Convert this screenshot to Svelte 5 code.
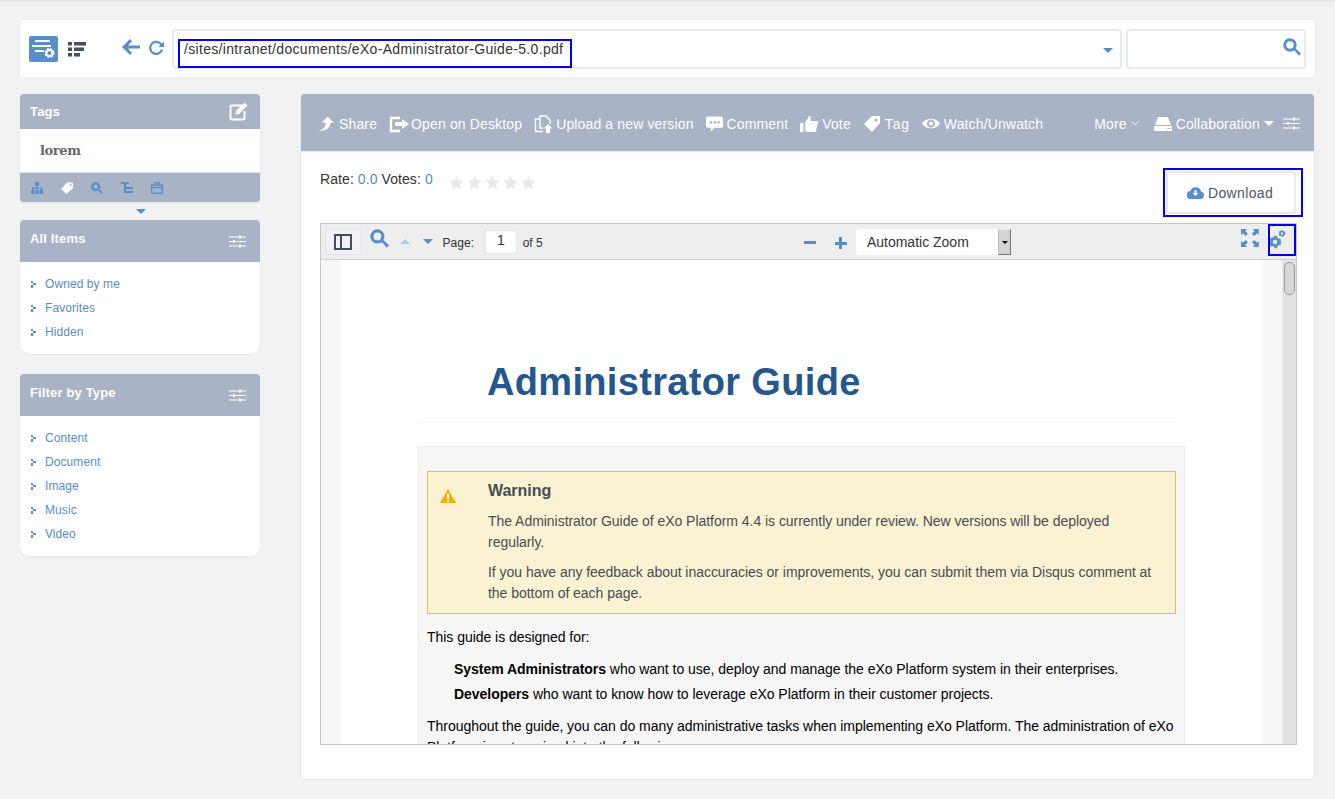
<script>
  const actions = [
    { label: 'Share', d: 'M10 1l7 7h-4c0 4-4 9-12 8 4-1 7-3 7-8H4z', w: 19 },
    { label: 'Open on Desktop', open: true, w: 20 },
    { label: 'Upload a new version', file: true, w: 20 },
    { label: 'Comment', d: 'M2 1h14a2 2 0 0 1 2 2v8a2 2 0 0 1-2 2H9l-4 4v-4H2a2 2 0 0 1-2-2V3a2 2 0 0 1 2-2zM4 6v2.500h2.500V6zM8 6v2.500h2.500V6zM12 6v2.500h2.500V6z', w: 19 },
    { label: 'Vote', d: 'M0 8h3.500v9H0zM5 8l4-7c2 0 2 2 1.500 5H17c1.500 0 2 2 .5 3l-1.500 7c-.5 1-1 1-2 1H8c-1 0-3-1-3-2z', w: 20 },
    { label: 'Tag', d: 'M1 9l8-8h8v7l-8 9zM13 3.500a1.500 1.500 0 1 0 .01 0z', w: 20, wide: true },
    { label: 'Watch/Unwatch', eye: true, w: 20 }
  ];
  const allItems = ['Owned by me', 'Favorites', 'Hidden'];
  const types = ['Content', 'Document', 'Image', 'Music', 'Video'];
</script>

{#snippet sliders(cls)}
  <svg class={cls} width="17" height="13" viewBox="0 0 17 13" fill="#fff">
    <path d="M0 1.500h17v1H0zM0 6h17v1H0zM0 10.500h17v1H0z" />
    <path d="M10 .5h2v3h-2zM4 5h2v3H4zM10 9.500h2v3h-2z" />
  </svg>
{/snippet}

{#snippet lens(size, color)}
  <svg width={size} height={size} viewBox="0 0 18 18">
    <circle cx="7" cy="7" r="5.200" fill="none" stroke={color} stroke-width="3" />
    <path d="M10.500 11.500l1.500-1.500 6 5.500-2 2.200z" fill={color} />
  </svg>
{/snippet}

{#snippet bullet()}
  <svg class="bullet" width="5" height="7" viewBox="0 0 5 7" fill="#578dc9">
    <path d="M0 0h2v2H0zM2 2h3v2H2zM0 4h2v3H0z" />
  </svg>
{/snippet}

{#snippet gear(cx, cy, r)}
  <circle {cx} {cy} r={r * 0.7} fill="none" stroke="#578dc9" stroke-width={r * 0.55} />
  <circle {cx} {cy} r={r} fill="none" stroke="#578dc9" stroke-width={r * 0.38} stroke-dasharray={r * 0.55} />
{/snippet}

<div class="page">
  <header class="topbar">
    <button class="viewbtn active" aria-label="Detail view">
      <svg width="23" height="18" viewBox="0 0 23 18" fill="#fff">
        <path d="M3 0h15v2H3zM0 5h19v2H0zM3 10h9v2H3z" />
        <circle cx="17.500" cy="13" r="3" fill="none" stroke="#fff" stroke-width="2" />
        <circle cx="17.500" cy="13" r="4.300" fill="none" stroke="#fff" stroke-width="1.400" stroke-dasharray="2 1.400" />
      </svg>
    </button>
    <button class="viewbtn list" aria-label="List view">
      <svg width="18" height="15" viewBox="0 0 18 15" fill="#474d63">
        <path d="M0 0h4v3.500H0zM6 0h12v3.500H6zM0 5.500h4V9H0zM6 5.500h10V9H6zM0 11h4v3.500H0zM6 11h6v3.500H6z" />
      </svg>
    </button>
    <svg class="back" width="18" height="16" viewBox="0 0 18 16" fill="#578dc9">
      <path d="M8 0l2 2-4 4.500h12v3H6l4 4.500-2 2-8-8z" />
    </svg>
    <svg class="refresh" width="15" height="15" viewBox="0 0 15 15" fill="none" stroke="#578dc9">
      <path d="M12.500 5A6 6 0 1 0 13 9.500" stroke-width="2.200" />
      <path d="M15 1.500V7H9.500z" fill="#578dc9" stroke="none" />
    </svg>
    <div class="combo">
      <span class="path">/sites/intranet/documents/eXo-Administrator-Guide-5.0.pdf</span>
      <span class="caret combo-caret"></span>
    </div>
    <div class="searchbox">
      {@render lens(18, '#578dc9')}
    </div>
  </header>

  <div class="columns">
    <aside class="side">
      <section class="panel tags">
        <div class="tags-head">
          <span>Tags</span>
          <svg width="19" height="19" viewBox="0 0 19 19">
            <path d="M13 3.500H3a1.500 1.500 0 0 0-1.500 1.500v11A1.500 1.500 0 0 0 3 17.500h11a1.500 1.500 0 0 0 1.500-1.500V9" fill="none" stroke="#fff" stroke-width="2" />
            <path d="M7 9L15.500 .5l3 3L10 12l-3.500.5z" fill="#fff" />
          </svg>
        </div>
        <div class="tag-cloud">lorem</div>
        <div class="tag-tools">
          <svg width="12" height="12" viewBox="0 0 12 12" fill="#578dc9"><path d="M4 0h4v4H6.500v1.500H11V8h1v4H8.500V8h1V6.500h-3V8h1v4h-3V8h1V6.500h-3V8h1v4H0V8h1V5.500h4.500V4H4z" /></svg>
          <svg width="12" height="12" viewBox="0 0 12 12" fill="#fff"><path d="M0 7l6-6.500h6V6l-6.500 6zM9.500 2a1 1 0 1 0 .01 0z" /></svg>
          <svg width="12" height="12" viewBox="0 0 18 18"><circle cx="7" cy="7" r="5" fill="none" stroke="#578dc9" stroke-width="3.400" /><path d="M10 12l2-2 6 6-2 2z" fill="#578dc9" /></svg>
          <svg width="12" height="12" viewBox="0 0 12 12" fill="#578dc9"><path d="M0 0h8v2H5v3h7v2H5v2h7v2H3V2H0z" /></svg>
          <svg width="12" height="12" viewBox="0 0 12 12" fill="none" stroke="#578dc9" stroke-width="1.300"><rect x=".7" y="3" width="10.600" height="8.300" /><path d="M4 3V.7h4V3M.7 5.500h10.600" /></svg>
        </div>
      </section>
      <div class="expander"><span class="caret"></span></div>
      <section class="panel box">
        <div class="box-head"><span>All Items</span>{@render sliders('')}</div>
        <ul>
          {#each allItems as item}
            <li>{@render bullet()}<span>{item}</span></li>
          {/each}
        </ul>
      </section>
      <section class="panel box">
        <div class="box-head"><span>Filter by Type</span>{@render sliders('')}</div>
        <ul>
          {#each types as item}
            <li>{@render bullet()}<span>{item}</span></li>
          {/each}
        </ul>
      </section>
    </aside>

    <main class="main">
      <nav class="actions">
        {#each actions as a}
          <span class="action" class:wide={a.wide}>
            <svg width={a.w} height="18" viewBox="0 0 20 18" fill="#fff">
              {#if a.file}
                <path d="M6 4V1h6l4 4v4M6 4H1.500v12.500H9M6 4v9h3" fill="none" stroke="#fff" stroke-width="1.400" />
                <path d="M14 9l4.500 4.500H16V18h-4v-4.500H9.500z" />
              {:else if a.open}
                <path d="M11 3H2v13h9" fill="none" stroke="#fff" stroke-width="2.400" />
                <path d="M13 4l7 5-7 5v-3H6V7h7z" />
              {:else if a.eye}
                <path d="M0 8.500C4 2 14 2 18 8.500 14 15 4 15 0 8.500zM9 4.500a4 4 0 1 0 .01 0zM9 6.500a2 2 0 1 1-.01 0z" fill-rule="evenodd" />
              {:else}
                <path d={a.d} fill-rule="evenodd" />
              {/if}
            </svg>
            <span>{a.label}</span>
          </span>
        {/each}
        <span class="more">More
          <svg width="8" height="5" viewBox="0 0 8 5" fill="none" stroke="#fff"><path d="M.5.5L4 4 7.500.5" /></svg>
        </span>
        <span class="collab">
          <svg width="18" height="14" viewBox="0 0 18 14" fill="#fff"><path d="M4 0h10l3 8H1zM0 9h18v5H0z" /><path d="M13 11h3v1h-3z" fill="#a8b3c5" /></svg>
          <span>Collaboration</span>
          <span class="caret white"></span>
        </span>
        {@render sliders('nav-sliders')}
      </nav>

      <div class="rate-row">
        <div class="rate">
          <span>Rate: <b>0.0</b> Votes: <b>0</b></span>
          <span class="stars">
            {#each [0, 1, 2, 3, 4] as s (s)}
              <svg width="15" height="15" viewBox="0 0 15 15" fill="#e9e9e9"><path d="M7.500 0l2.100 5.200 5.400.4-4.200 3.500 1.400 5.500-4.700-3-4.700 3 1.400-5.500L0 5.600l5.400-.4z" /></svg>
            {/each}
          </span>
        </div>
        <div class="outline">
          <button class="download">
            <svg width="17" height="13" viewBox="0 0 17 13"><path d="M4 13a4 4 0 0 1-.5-8A5.500 5.500 0 0 1 14 5.500 3.800 3.800 0 0 1 13 13z" fill="#578dc9" /><path d="M7.500 4h2v3h2l-3 3-3-3h2z" fill="#fff" /></svg>
            Download
          </button>
        </div>
      </div>

      <div class="viewer">
        <div class="vbar">
          <button class="sidebar-btn" aria-label="Toggle sidebar">
            <svg width="18" height="16" viewBox="0 0 18 16" fill="none" stroke="#474d63" stroke-width="2"><rect x="1" y="1" width="16" height="14" /><path d="M7 1v14" /></svg>
          </button>
          <span class="v-lens">{@render lens(19, '#578dc9')}</span>
          <span class="tri up"></span>
          <span class="tri down"></span>
          <span class="page-lbl">Page:</span>
          <span class="page-input">1</span>
          <span class="of">of 5</span>
          <span class="zoom-minus"></span>
          <span class="zoom-plus"></span>
          <div class="zoom-select">
            <span>Automatic Zoom</span>
            <span class="select-arrow"><i></i></span>
          </div>
          <svg class="fullscreen" width="18" height="18" viewBox="0 0 18 18" fill="#578dc9">
            <path d="M0 0h6L4.200 1.800 7 4.600 4.600 7 1.800 4.200 0 6zM18 0v6l-1.800-1.800L13.400 7 11 4.600l2.800-2.800L12 0zM0 18v-6l1.800 1.800L4.600 11 7 13.400l-2.800 2.800L6 18zM18 18h-6l1.800-1.800L11 13.400l2.400-2.400 2.800 2.800L18 12z" />
          </svg>
          <div class="gear-box">
            <svg width="18" height="24" viewBox="0 0 18 24">
              {@render gear(5, 16, 5.200)}
              {@render gear(12, 7.500, 2.800)}
            </svg>
          </div>
        </div>
        <div class="vbody">
          <div class="doc-wrap">
            <div class="doc">
              <h1>Administrator Guide</h1>
              <div class="rule"></div>
              <div class="content">
                <div class="warning">
                  <svg class="warn-ico" width="16" height="14" viewBox="0 0 16 14">
                    <path d="M8 0l8 14H0z" fill="#f5b000" />
                    <path d="M7 4.500h2V10H7zM7 11h2v2H7z" fill="#fff" />
                  </svg>
                  <div class="warn-text">
                    <h2>Warning</h2>
                    <p>The Administrator Guide of eXo Platform 4.4 is currently under review. New versions will be deployed regularly.</p>
                    <p>If you have any feedback about inaccuracies or improvements, you can submit them via Disqus comment at the bottom of each page.</p>
                  </div>
                </div>
                <p class="intro">This guide is designed for:</p>
                <p class="aud first"><strong>System Administrators</strong> who want to use, deploy and manage the eXo Platform system in their enterprises.</p>
                <p class="aud"><strong>Developers</strong> who want to know how to leverage eXo Platform in their customer projects.</p>
                <p class="through">Throughout the guide, you can do many administrative tasks when implementing eXo Platform. The administration of eXo Platform is categorized into the following:</p>
              </div>
            </div>
          </div>
          <div class="scrolltrack"><div class="thumb"></div></div>
        </div>
      </div>
    </main>
  </div>
</div>

<style>
  :global(body) {
    margin: 0;
    background: #f2f2f2;
    font-family: "Liberation Sans", Arial, sans-serif;
  }
  .page {
    height: 799px;
    box-sizing: border-box;
    padding: 20px 20px 0;
    overflow: hidden;
    box-shadow: inset 0 3px 3px -2px #dcdcdc;
  }
  button { font-family: inherit; padding: 0; margin: 0; }
  .caret {
    display: inline-block;
    width: 0;
    height: 0;
    border-left: 5px solid transparent;
    border-right: 5px solid transparent;
    border-top: 5px solid #578dc9;
  }
  .caret.white { border-top-color: #fff; margin-left: 4px; }

  .topbar {
    display: flex;
    align-items: flex-start;
    height: 57px;
    box-sizing: border-box;
    padding-top: 9px;
    width: 1295px;
    background: #fff;
    border-radius: 3px;
    box-shadow: 0 0 2px #dfe5ee;
  }
  .viewbtn {
    border: 0;
    background: none;
    width: 29px;
    height: 26px;
    margin: 7px 0 0 9px;
    display: flex;
    align-items: center;
    justify-content: center;
    border-radius: 2px;
  }
  .viewbtn.active { background: #578dc9; }
  .viewbtn.list { margin-left: 10px; width: 18px; }
  .back { margin: 10px 0 0 36px; }
  .refresh { margin: 11px 0 0 9px; }
  .combo {
    margin-left: 8px;
    width: 950px;
    height: 40px;
    box-sizing: border-box;
    border: 2px solid #e6ebf2;
    border-radius: 4px;
    display: flex;
    align-items: flex-start;
    padding: 8px 0 0 4px;
    background: #fff;
  }
  .path {
    width: 394px;
    height: 29px;
    box-sizing: border-box;
    border: 2px solid #0000ee;
    padding: 0 0 0 4px;
    font-size: 14px;
    line-height: 16px;
    letter-spacing: 0.32px;
    color: #333;
    white-space: nowrap;
  }
  .combo-caret { margin: 9px 0 0 531px; }
  .searchbox {
    margin-left: 4px;
    width: 180px;
    height: 40px;
    box-sizing: border-box;
    border: 2px solid #e6ebf2;
    border-radius: 4px;
    display: flex;
    justify-content: flex-end;
    align-items: flex-start;
    padding: 7px 3px 0 0;
  }

  .columns {
    display: flex;
    gap: 40px;
    margin-top: 17px;
    align-items: flex-start;
  }
  .side { width: 240px; flex: none; }
  .panel { background: #fff; border-radius: 4px; overflow: hidden; }
  .tags { box-shadow: 0 1px 2px #dfdfdf; }
  .tags-head {
    height: 35px;
    background: #a8b3c5;
    display: flex;
    align-items: center;
    justify-content: space-between;
    padding: 0 12px 0 10px;
    color: #fff;
    font-size: 13px;
    font-weight: bold;
    letter-spacing: 0.15px;
  }
  .tag-cloud {
    height: 43px;
    box-sizing: border-box;
    padding: 13px 0 0 20px;
    font: bold 13px/18px "DejaVu Serif", serif;
    letter-spacing: -0.4px;
    color: #666;
  }
  .tag-tools {
    height: 30px;
    background: #a8b3c5;
    border-top: 1px solid #dfe4ea;
    display: flex;
    align-items: center;
    gap: 18px;
    padding-left: 11px;
    box-sizing: border-box;
  }
  .expander {
    height: 18px;
    display: flex;
    justify-content: center;
    align-items: flex-start;
    padding: 7px 0 0 1px;
    box-sizing: border-box;
  }
  .box { border-radius: 4px 4px 10px 10px; margin-bottom: 20px; box-shadow: 0 1px 2px #e4e4e4; }
  .box-head {
    height: 42px;
    box-sizing: border-box;
    background: #a8b3c5;
    display: flex;
    justify-content: space-between;
    padding: 11px 14px 0 10px;
    color: #fff;
    font-size: 13px;
    font-weight: bold;
    line-height: 15px;
    letter-spacing: 0.15px;
  }
  .box-head svg { margin-top: 4px; }
  ul { list-style: none; margin: 0; padding: 10px 0; }
  li {
    height: 24px;
    display: flex;
    align-items: center;
    padding-left: 11px;
    font-size: 12px;
    letter-spacing: 0.08px;
    color: #578dc9;
  }
  .bullet { margin-right: 9px; }

  .main {
    width: 1015px;
    height: 686px;
    box-sizing: border-box;
    background: #fff;
    border: 1px solid #e6ebf0;
    border-top: 0;
    border-radius: 4px;
    overflow: hidden;
  }
  .actions {
    margin: 0 -1px;
    height: 58px;
    box-sizing: border-box;
    background: #a8b3c5;
    border-bottom: 1px solid #e6ebf0;
    display: flex;
    align-items: center;
    padding: 2px 0 0 18px;
    color: #fff;
    font-size: 14px;
    letter-spacing: 0.14px;
    gap: 12px;
  }
  .action { display: flex; align-items: center; gap: 2px; white-space: nowrap; }
  .action.wide { letter-spacing: 0.8px; }
  .more { margin-left: 39px; display: flex; align-items: center; gap: 4px; }
  .collab { margin-left: 3px; display: flex; align-items: center; gap: 4px; }
  .collab .caret { margin-left: 0; }
  .nav-sliders { margin-left: -3px; }

  .rate-row {
    display: flex;
    justify-content: space-between;
    height: 72px;
    box-sizing: border-box;
    padding: 16px 11px 0 19px;
  }
  .rate {
    font-size: 14px;
    line-height: 20px;
    letter-spacing: 0.08px;
    color: #333;
    display: flex;
    align-items: flex-start;
    padding-top: 1px;
    white-space: pre;
  }
  .rate b { font-weight: normal; color: #578dc9; }
  .stars { display: flex; gap: 3px; margin: 6px 0 0 16px; }
  .outline {
    width: 140px;
    height: 49px;
    box-sizing: border-box;
    border: 2px solid #0000ee;
    padding: 1px;
  }
  .download {
    width: 130px;
    height: 43px;
    background: #fff;
    border: 2px solid #e6ebf2;
    border-radius: 2px;
    color: #4d5466;
    font-size: 14px;
    letter-spacing: 0.35px;
    display: flex;
    align-items: center;
    justify-content: flex-start;
    padding-left: 19px;
    gap: 4px;
  }

  .viewer {
    margin: -1px 0 0 19px;
    width: 977px;
    height: 522px;
    box-sizing: border-box;
    border: 1px solid #c6c6c6;
    overflow: hidden;
  }
  .vbar {
    height: 36px;
    box-sizing: border-box;
    background: #eeeeee;
    border-bottom: 1px solid #d0d0d0;
    display: flex;
    align-items: flex-start;
    font-size: 12px;
    color: #333;
  }
  .sidebar-btn {
    width: 36px;
    height: 26px;
    margin: 5px 0 0 4px;
    border: 1px solid #e4e8ee;
    border-radius: 2px;
    background: #f1f2f4;
    display: flex;
    align-items: center;
    justify-content: center;
  }
  .v-lens { margin: 5px 0 0 9px; height: 19px; }
  .tri {
    width: 0;
    height: 0;
    border-left: 5px solid transparent;
    border-right: 5px solid transparent;
    margin-top: 15px;
  }
  .tri.up { border-bottom: 5px solid #b5cbe4; margin-left: 11px; }
  .tri.down { border-top: 5px solid #578dc9; margin-left: 13px; }
  .page-lbl { margin: 12px 0 0 10px; line-height: 14px; }
  .page-input {
    width: 34px;
    height: 26px;
    margin: 5px 0 0 10px;
    box-sizing: border-box;
    border: 2px solid #e6ebf2;
    border-radius: 4px;
    background: #fff;
    text-align: center;
    font-size: 14px;
    line-height: 18px;
  }
  .of { margin: 12px 0 0 5px; line-height: 14px; width: 40px; }
  .zoom-minus {
    width: 12px;
    height: 3px;
    background: #578dc9;
    margin: 17px 0 0 242px;
  }
  .zoom-plus {
    width: 12px;
    height: 12px;
    margin: 13px 0 0 19px;
    background:
      linear-gradient(#578dc9, #578dc9) center / 12px 3px no-repeat,
      linear-gradient(#578dc9, #578dc9) center / 3px 12px no-repeat;
  }
  .zoom-select {
    width: 157px;
    height: 26px;
    margin: 5px 0 0 9px;
    background: #fff;
    border-radius: 3px 0 0 3px;
    display: flex;
    justify-content: space-between;
    font-size: 14px;
    line-height: 27px;
    padding-left: 11px;
    box-sizing: border-box;
  }
  .select-arrow {
    width: 13px;
    height: 26px;
    box-sizing: border-box;
    background: #d4d4d4;
    border: 1px solid;
    border-color: #e8e8e8 #777 #777 #bbb;
    display: flex;
    align-items: center;
    justify-content: center;
  }
  .select-arrow i {
    width: 0;
    height: 0;
    border-left: 3px solid transparent;
    border-right: 3px solid transparent;
    border-top: 3px solid #000;
  }
  .fullscreen { margin: 5px 0 0 230px; }
  .gear-box {
    width: 28px;
    height: 32px;
    margin-left: 9px;
    box-sizing: border-box;
    border: 2px solid #0000ee;
    flex: none;
  }

  .vbody { display: flex; height: 485px; overflow: hidden; background: #f7f7f7; }
  .doc-wrap { width: 962px; padding-left: 20px; box-sizing: border-box; }
  .doc { width: 921px; height: 485px; background: #fff; overflow: hidden; position: relative; }
  h1 {
    margin: 100px 0 0 146px;
    font-size: 38px;
    line-height: 44px;
    font-weight: bold;
    letter-spacing: 0.33px;
    color: #24578f;
  }
  .rule { margin: 17px 0 0 79px; width: 756px; height: 1px; background: #f7f7f7; }
  .content {
    margin: 24px 0 0 77px;
    width: 767px;
    height: 320px;
    box-sizing: border-box;
    background: #f6f6f6;
    border: 1px solid #ececec;
    padding: 24px 8px 0;
    font-size: 14px;
    line-height: 21px;
    letter-spacing: -0.036px;
    color: #000;
  }
  .warning {
    width: 749px;
    height: 143px;
    box-sizing: border-box;
    background: #faf2d3;
    border: 1px solid #eeb94f;
    display: flex;
    padding: 9px 18px 0 12px;
    color: #474d55;
  }
  .warn-ico { margin-top: 8px; flex: none; }
  .warn-text { margin-left: 32px; }
  h2 { margin: 0 0 10px; font-size: 16px; line-height: 20px; font-weight: bold; color: #474d55; }
  .warn-text p { margin: 0 0 9px; }
  .intro { margin: 13px 0 0; }
  .aud { margin: 0 0 4px 27px; line-height: 21px; }
  .aud.first { margin-top: 11px; }
  .through { margin: 11px 0 0; }

  .scrolltrack { flex: 1; background: #e2e2e2; border-left: 1px solid #eaeaea; padding: 2px 1px; }
  .thumb {
    width: 9px;
    height: 31px;
    margin: 0 auto;
    background: #d8d8d8;
    border: 1px solid #999;
    border-radius: 5px;
  }
</style>
